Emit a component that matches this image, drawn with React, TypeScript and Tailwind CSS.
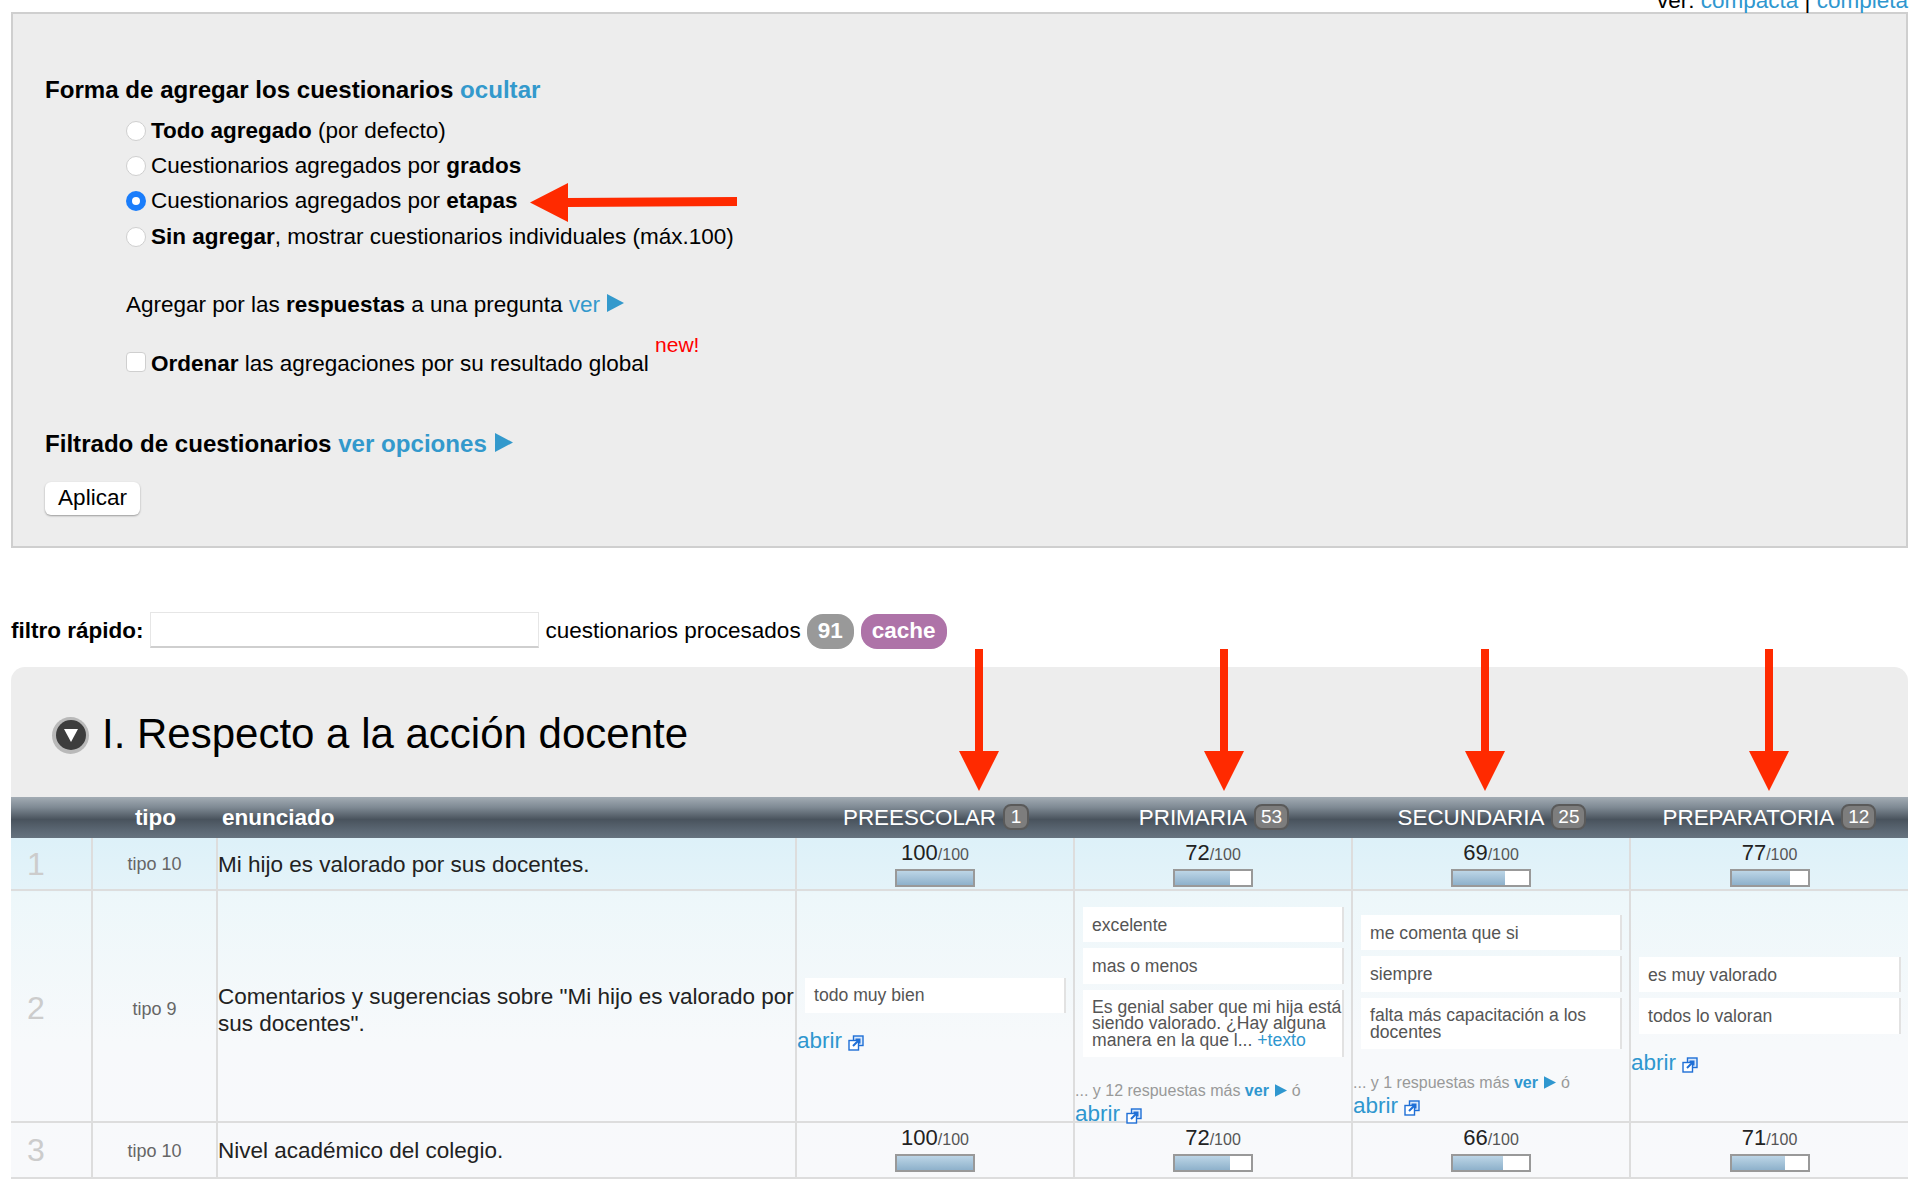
const headerBg = "bg-[linear-gradient(to_bottom,#a3acb4_0%,#7f8a94_25%,#49535d_55%,#5a6672_80%,#66737f_100%)]";

const columns = [
  { name: "PREESCOLAR", count: 1 },
  { name: "PRIMARIA", count: 53 },
  { name: "SECUNDARIA", count: 25 },
  { name: "PREPARATORIA", count: 12 },
];

function Triangle({ className }: { className: string }) {
  return (
    <svg viewBox="0 0 17 18" className={className}>
      <polygon points="0,0 17,9 0,18" fill="#3399cc" />
    </svg>
  );
}

function ExternalIcon() {
  return (
    <svg viewBox="0 0 16 16" className="ml-[6px] inline-block h-[16px] w-[16px] align-[-3px]" fill="none" stroke="#1f6fd6">
      <rect x="5.5" y="1" width="9.5" height="9.5" strokeWidth="1.4" fill="#dbe9fb" />
      <rect x="1" y="5.5" width="9.5" height="9.5" strokeWidth="1.4" fill="#fff" />
      <path d="M5 11 L11 5 M7.5 4.5 H11.5 V8.5" strokeWidth="2" />
    </svg>
  );
}

function Radio({ checked }: { checked?: boolean }) {
  if (checked) {
    return (
      <span className="mr-[5px] flex h-[20px] w-[20px] items-center justify-center rounded-full bg-[#1a7dfb]">
        <span className="h-[8px] w-[8px] rounded-full bg-white" />
      </span>
    );
  }
  return <span className="mr-[5px] h-[20px] w-[20px] rounded-full border border-[#cfcfcf] bg-white" />;
}

function Score({ value }: { value: number }) {
  return (
    <div className="flex flex-col items-center pt-[2px]">
      <div className="text-[22px] leading-[25px] text-[#222]">
        {value}
        <span className="text-[16px] text-[#555]">/100</span>
      </div>
      <div className="mt-[2px] h-[18px] w-[80px] border-2 border-[#999] bg-white">
        <div
          className="h-full bg-[linear-gradient(to_bottom,#bcd5e6,#8eb1cb)]"
          style={{ width: `${value}%` }}
        />
      </div>
    </div>
  );
}

function Comment({ children }: { children: React.ReactNode }) {
  return (
    <div className="ml-[8px] mr-[7px] border-r-2 border-[#e2e2e2] bg-white py-[9.5px] pl-[9px] text-[17.6px] leading-[16.3px] text-[#555]">
      {children}
    </div>
  );
}

function Abrir({ className }: { className?: string }) {
  return (
    <div className={`leading-[25px] text-[#2f97cf] ${className ?? ""}`}>
      abrir
      <ExternalIcon />
    </div>
  );
}

function More({ count, className }: { count: number; className: string }) {
  return (
    <div className={`text-[16px] leading-[20px] text-[#999] ${className}`}>
      ... y {count} respuestas más <b className="text-[#2f97cf]">ver</b>{" "}
      <svg viewBox="0 0 17 18" className="ml-[2px] inline-block h-[13px] w-[12px] align-[-1px]">
        <polygon points="0,0 17,9 0,18" fill="#2f97cf" />
      </svg>{" "}
      ó
    </div>
  );
}

function DownArrow({ className }: { className: string }) {
  return (
    <svg viewBox="0 0 40 142" className={`absolute top-[649px] h-[142px] w-[40px] ${className}`}>
      <polygon points="16,0 24,0 24,102 40,102 20,142 0,102 16,102" fill="#ff2a00" />
    </svg>
  );
}

export default function App() {
  return (
    <div className="relative h-[1179px] w-[1920px] overflow-hidden bg-white pl-[11px] pr-[12px] font-['Liberation_Sans',Arial,sans-serif] text-[22.5px] text-black">
      {/* top links, cut by the edge of the shot */}
      <div className="flex h-[12px] items-end justify-end">
        <div className="leading-[22px]">
          ver: <a className="text-[#2f97cf]">compacta</a> | <a className="text-[#2f97cf]">completa</a>
        </div>
      </div>

      {/* options panel */}
      <div className="h-[536px] border-2 border-[#cfcfcf] bg-[#ededed] pl-[32px] pr-[33px] pt-[61px] leading-[30px]">
        <div className="text-[24.1px] font-bold">
          Forma de agregar los cuestionarios <a className="text-[#3399cc]">ocultar</a>
        </div>
        <div className="ml-[81px] mt-[8px]">
          <div className="flex h-[35.4px] items-center">
            <Radio />
            <span>
              <b>Todo agregado</b> (por defecto)
            </span>
          </div>
          <div className="flex h-[35.4px] items-center">
            <Radio />
            <span>
              Cuestionarios agregados por <b>grados</b>
            </span>
          </div>
          <div className="flex h-[35.4px] items-center">
            <Radio checked />
            <span>
              Cuestionarios agregados por <b>etapas</b>
            </span>
          </div>
          <div className="flex h-[35.4px] items-center">
            <Radio />
            <span>
              <b>Sin agregar</b>, mostrar cuestionarios individuales (máx.100)
            </span>
          </div>
          <div className="mt-[35px]">
            Agregar por las <b>respuestas</b> a una pregunta <a className="text-[#3399cc]">ver</a>{" "}
            <Triangle className="ml-[1px] inline-block h-[18px] w-[17px] align-[0px]" />
          </div>
          <div className="mt-[25px] flex items-center">
            <span className="mr-[5px] h-[20px] w-[20px] rounded-[4px] border border-[#cfcfcf] bg-white" />
            <span>
              <b>Ordenar</b> las agregaciones por su resultado global{" "}
              <span className="align-[19px] text-[21px] leading-[0] text-[#ff0000]">new!</span>
            </span>
          </div>
        </div>
        <div className="mt-[50px] text-[24.1px] font-bold">
          Filtrado de cuestionarios <a className="text-[#3399cc]">ver opciones</a>{" "}
          <Triangle className="ml-[1px] inline-block h-[19px] w-[18px] align-[0px]" />
        </div>
        <button className="mt-[23px] flex h-[33px] w-[95px] items-center justify-center rounded-[6px] bg-white shadow-[0_1px_2px_rgba(0,0,0,0.35)]">
          Aplicar
        </button>
      </div>

      {/* quick filter */}
      <div className="mt-[64px] flex h-[36px] items-center">
        <b className="mt-[2px]">filtro rápido:</b>
        <div className="ml-[7px] h-[36px] w-[389px] border border-b-2 border-[#e6e6e6] border-b-[#cfcfcf] bg-white" />
        <span className="ml-[6px] mt-[2px]">cuestionarios procesados</span>
        <span className="ml-[6px] mt-[2px] flex h-[35px] w-[47px] items-center justify-center rounded-[16px] bg-[#999] font-bold text-white">
          91
        </span>
        <span className="ml-[7px] mt-[2px] flex h-[35px] w-[86px] items-center justify-center rounded-[16px] bg-[#ae73a8] font-bold text-white">
          cache
        </span>
      </div>

      {/* section */}
      <div className="mt-[19px] rounded-t-[14px] bg-[#ededed]">
        <div className="flex h-[130px] items-center pl-[41px]">
          <span className="mt-[6px] flex h-[37px] w-[37px] items-center justify-center rounded-full bg-[#b9b9b9]">
            <span className="flex h-[30px] w-[30px] items-center justify-center rounded-full bg-[#3d3d3d]">
              <svg viewBox="0 0 14 13" className="h-[13px] w-[14px]">
                <polygon points="0,0 14,0 7,13" fill="#fff" />
              </svg>
            </span>
          </span>
          <h2 className="ml-[13px] mt-[3px] text-[42px] font-normal leading-[50px]">I. Respecto a la acción docente</h2>
        </div>

        <div className="grid grid-cols-[82px_125px_579px_278px_278px_278px_277px]">
          {/* header */}
          <div className={`col-span-7 grid h-[41px] grid-cols-subgrid items-center text-white ${headerBg}`}>
            <div />
            <b className="text-center">tipo</b>
            <b className="pl-[4px]">enunciado</b>
            {columns.map((c) => (
              <div key={c.name} className="flex items-center justify-center">
                <span className="text-[22.4px]">{c.name}</span>
                <span className="ml-[7px] flex h-[26px] min-w-[26px] items-center justify-center rounded-[8px] border-2 border-[#5a5a5a] bg-[#7d7d7d] px-[5px] text-[19px]">
                  {c.count}
                </span>
              </div>
            ))}
          </div>

          {/* rows */}
          <div className="col-span-7 grid grid-cols-subgrid bg-[linear-gradient(to_bottom,#ddf1f9_0%,#e4f3f9_15%,#edf7fa_16%,#f7f9fb_60%,#f8f9fb_100%)]">
            <div className="col-span-7 grid h-[53px] grid-cols-subgrid border-b-2 border-[#dddddd]">
              <div className="flex items-center border-r-2 border-[#dddddd] pl-[16px] text-[32px] text-[#cccccc]">1</div>
              <div className="flex items-center justify-center border-r-2 border-[#dddddd] pt-[2px] text-[18px] text-[#666]">tipo 10</div>
              <div className="flex items-center border-r-2 border-[#dddddd] pt-[2px] text-[#222]">Mi hijo es valorado por sus docentes.</div>
              <div className="border-r-2 border-[#dddddd]"><Score value={100} /></div>
              <div className="border-r-2 border-[#dddddd]"><Score value={72} /></div>
              <div className="border-r-2 border-[#dddddd]"><Score value={69} /></div>
              <div><Score value={77} /></div>
            </div>

            <div className="col-span-7 grid h-[232px] grid-cols-subgrid border-b-2 border-[#dddddd]">
              <div className="flex items-center border-r-2 border-[#dddddd] pl-[16px] text-[32px] text-[#cccccc]">2</div>
              <div className="flex items-center justify-center border-r-2 border-[#dddddd] pt-[2px] text-[18px] text-[#666]">tipo 9</div>
              <div className="flex items-center whitespace-nowrap border-r-2 border-[#dddddd] pt-[4px] leading-[27px] text-[#222]">
                <span>
                  Comentarios y sugerencias sobre "Mi hijo es valorado por
                  <br />
                  sus docentes".
                </span>
              </div>

              <div className="flex flex-col justify-center border-r-2 border-[#dddddd] pt-[14px]">
                <Comment>todo muy bien</Comment>
                <Abrir className="mt-[15px]" />
              </div>

              <div className="flex flex-col justify-center border-r-2 border-[#dddddd] pt-[16px]">
                <div className="flex flex-col gap-[6px]">
                  <Comment>excelente</Comment>
                  <Comment>mas o menos</Comment>
                  <Comment>
                    Es genial saber que mi hija está siendo valorado. ¿Hay alguna manera en la que l...{" "}
                    <a className="text-[#2f97cf]">+texto</a>
                  </Comment>
                </div>
                <More count={12} className="mt-[23.5px]" />
                <Abrir />
              </div>

              <div className="flex flex-col justify-center border-r-2 border-[#dddddd] pt-[16px]">
                <div className="flex flex-col gap-[6px]">
                  <Comment>me comenta que si</Comment>
                  <Comment>siempre</Comment>
                  <Comment>falta más capacitación a los docentes</Comment>
                </div>
                <More count={1} className="mt-[23.5px]" />
                <Abrir />
              </div>

              <div className="flex flex-col justify-center pt-[15px]">
                <div className="flex flex-col gap-[6px]">
                  <Comment>es muy valorado</Comment>
                  <Comment>todos lo valoran</Comment>
                </div>
                <Abrir className="mt-[16px]" />
              </div>
            </div>

            <div className="col-span-7 grid h-[56px] grid-cols-subgrid border-b-2 border-[#dddddd]">
              <div className="flex items-center border-r-2 border-[#dddddd] pl-[16px] text-[32px] text-[#cccccc]">3</div>
              <div className="flex items-center justify-center border-r-2 border-[#dddddd] pt-[2px] text-[18px] text-[#666]">tipo 10</div>
              <div className="flex items-center border-r-2 border-[#dddddd] pt-[2px] text-[#222]">Nivel académico del colegio.</div>
              <div className="border-r-2 border-[#dddddd]"><Score value={100} /></div>
              <div className="border-r-2 border-[#dddddd]"><Score value={72} /></div>
              <div className="border-r-2 border-[#dddddd]"><Score value={66} /></div>
              <div><Score value={71} /></div>
            </div>
          </div>
        </div>
      </div>

      {/* red annotation arrows */}
      <svg viewBox="0 0 207 39" className="absolute left-[530px] top-[183px] h-[39px] w-[207px]">
        <polygon points="0,19.5 38,0 38,15 207,14 207,23 38,24 38,39" fill="#ff2a00" />
      </svg>
      <DownArrow className="left-[959px]" />
      <DownArrow className="left-[1204px]" />
      <DownArrow className="left-[1465px]" />
      <DownArrow className="left-[1749px]" />
    </div>
  );
}
